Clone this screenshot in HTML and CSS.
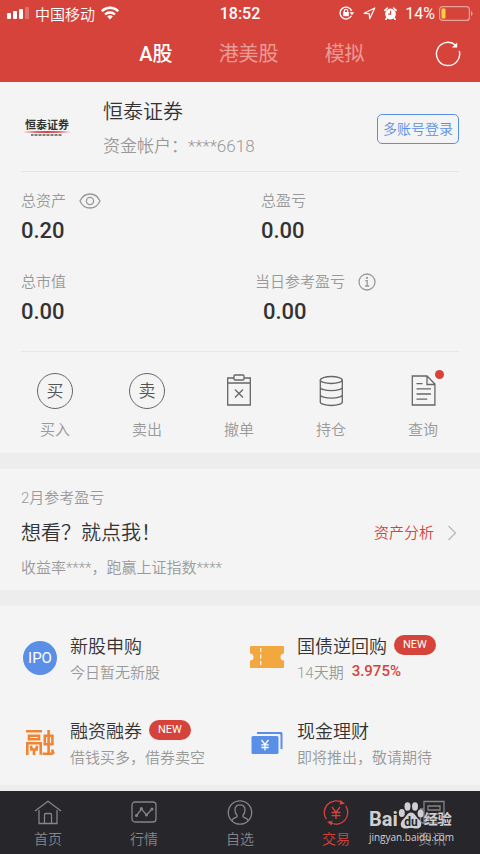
FILE: index.html
```html
<!DOCTYPE html>
<html lang="zh-CN">
<head>
<meta charset="utf-8">
<meta name="viewport" content="width=device-width, initial-scale=1">
<title>交易</title>
<link rel="stylesheet" href="styles.css">
</head>
<body>
<header class="top">
  <div class="status">
    <div class="status-left">
      <svg width="22" height="12" viewBox="0 0 22 12" fill="#fff"><rect x="0" y="6" width="4" height="6" rx="1"/><rect x="6" y="4" width="4" height="8" rx="1"/><rect x="12" y="2" width="4" height="10" rx="1"/><rect x="18" y="0" width="4" height="12" rx="1" opacity=".25"/></svg>
      <span class="carrier">中国移动</span>
      <svg width="18" height="14" viewBox="0 0 18 14" fill="none" stroke="#fff" stroke-width="2.4"><path d="M.8 5.2a11.6 11.6 0 0 1 16.4 0M4 8.5a7.1 7.1 0 0 1 10 0"/><path d="M9 13.4 6.2 10.6a4 4 0 0 1 5.6 0z" fill="#fff" stroke="none"/></svg>
    </div>
    <time class="clock">18:52</time>
    <div class="status-right">
      <svg width="16" height="14" viewBox="0 0 16 14" fill="none" stroke="#fff" stroke-width="1.3"><path d="M12.4 9.8A6 6 0 1 1 12.7 5"/><path d="M10.5 6.2h4.8l-2.4 3z" fill="#fff" stroke="none"/><rect x="4.2" y="6" width="5.6" height="4.2" fill="#fff" stroke="none"/><path d="M5.3 6.5V5a1.7 1.7 0 0 1 3.4 0v1.5"/></svg>
      <svg width="13" height="13" viewBox="0 0 13 13" fill="none" stroke="#fff" stroke-width="1.2" stroke-linejoin="round"><path d="M11.8 1 1.2 6.3l5 .4.5 5z"/></svg>
      <svg width="13" height="13" viewBox="0 0 13 13"><circle cx="6.5" cy="7" r="5.4" fill="#fff"/><path d="M.9 3.4 3.4 1M12.1 3.4 9.6 1M2.8 11l-1 1.4M10.2 11l1 1.4" stroke="#fff" stroke-width="1.6" stroke-linecap="round"/><path d="M6.6 3.8v3.4H4.2" fill="none" stroke="#d6433b" stroke-width="1.2"/></svg>
      <span class="percent">14%</span>
      <svg width="34" height="15" viewBox="0 0 34 15"><rect x=".6" y=".6" width="29.8" height="13.8" rx="3" fill="none" stroke="#fff" stroke-opacity=".5" stroke-width="1.2"/><rect x="2.5" y="2.5" width="4" height="10" rx="1" fill="#f8cf3c"/><path d="M32 5v5q1.6-.8 1.6-2.5T32 5z" fill="#fff" fill-opacity=".5"/></svg>
    </div>
  </div>
  <div class="market">
    <nav class="tabs">
      <a href="#a" class="tab tab-on">A股</a>
      <a href="#hk" class="tab">港美股</a>
      <a href="#sim" class="tab">模拟</a>
    </nav>
    <button class="refresh" type="button" aria-label="刷新">
      <svg width="26" height="26" viewBox="0 0 26 26" fill="none" stroke="#fff" stroke-width="1.4"><path d="M24.3 10A11.6 11.6 0 1 1 20.7 4.2"/><path d="M22.2 1.4v5.2h-5.4z" fill="#fff" stroke="none"/></svg>
    </button>
  </div>
</header>

<main>
  <section class="panel">
    <div class="account">
      <svg class="broker" width="48" height="20" viewBox="0 0 48 20"><text x="24" y="10" text-anchor="middle" class="broker-name">恒泰证券</text><path d="M0 13Q24 11 48 13 24 15 0 13z" fill="#d9444c"/><path d="M8 16h31" stroke="#555" stroke-width="1.3" stroke-dasharray="2 .5 1 .5"/></svg>
      <div class="holder">
        <h1 class="holder-name">恒泰证券</h1>
        <p class="holder-no">资金帐户：****6618</p>
      </div>
      <button class="multi" type="button">多账号登录</button>
    </div>
    <dl class="stats">
      <div>
        <dt class="label">总资产 <svg width="22" height="16" viewBox="0 0 22 16" fill="none" stroke="#999" stroke-width="1.3"><path d="M1 8C3 3.500 6.500 1 11 1s8 2.500 10 7c-2 4.500-5.500 7-10 7S3 12.500 1 8z"/><circle cx="11" cy="8" r="3.600"/></svg></dt>
        <dd class="value">0.20</dd>
      </div>
      <div class="inset">
        <dt class="label">总盈亏</dt>
        <dd class="value">0.00</dd>
      </div>
      <div>
        <dt class="label">总市值</dt>
        <dd class="value">0.00</dd>
      </div>
      <div class="today">
        <dt class="label">当日参考盈亏 <svg width="18" height="18" viewBox="0 0 18 18" fill="none" stroke="#999" stroke-width="1.3"><circle cx="9" cy="9" r="8"/><path d="M7.200 7.600H9.200V13M7 13h4.300"/><circle cx="9" cy="4.900" r="1.100" fill="#999" stroke="none"/></svg></dt>
        <dd class="value">0.00</dd>
      </div>
    </dl>
    <nav class="actions">
      <a href="#buy" class="action"><span class="ring">买</span>买入</a>
      <a href="#sell" class="action"><span class="ring">卖</span>卖出</a>
      <a href="#cancel" class="action"><svg width="36" height="36" viewBox="0 0 36 36" fill="none" stroke="#666" stroke-width="1.3"><path d="M13 5H6.700v27h22.600V5H23M6.700 10h22.600"/><rect x="13" y="2" width="10" height="5" rx="1"/><path d="m14 16.500 8 8m0-8-8 8"/></svg>撤单</a>
      <a href="#hold" class="action"><svg width="36" height="36" viewBox="0 0 36 36" fill="none" stroke="#666" stroke-width="1.3"><ellipse cx="18.300" cy="7" rx="11" ry="3.500"/><path d="M7.300 7v22c0 1.900 4.900 3.500 11 3.500s11-1.600 11-3.500V7M7.300 14.300c0 1.900 4.900 3.400 11 3.400s11-1.500 11-3.400M7.300 21.700c0 1.900 4.900 3.400 11 3.400s11-1.500 11-3.400"/></svg>持仓</a>
      <a href="#query" class="action"><svg width="36" height="36" viewBox="0 0 36 36" fill="none" stroke="#666" stroke-width="1.3"><path d="M22 3H7.300v29h22.600V11zv8.500h7.900M11.500 10.700h6M11.500 15.800H26M11.500 21H26M11.500 26.200h10.700"/></svg><i class="dot"></i>查询</a>
    </nav>
  </section>

  <section class="panel review">
    <div class="review-text">
      <p class="muted">2月参考盈亏</p>
      <h2 class="review-title">想看？就点我！</h2>
      <p class="muted">收益率****，跑赢上证指数****</p>
    </div>
    <a href="#analysis" class="analysis">资产分析 <svg width="10" height="16" viewBox="0 0 10 16" fill="none" stroke="#bbb" stroke-width="1.400"><path d="m1.500 1 7 7-7 7"/></svg></a>
  </section>

  <section class="panel products">
    <a href="#ipo" class="product">
      <span class="pic"><span class="ipo">IPO</span></span>
      <span><strong class="title">新股申购</strong><small class="sub">今日暂无新股</small></span>
    </a>
    <a href="#repo" class="product">
      <svg class="pic" width="36" height="36" viewBox="0 0 36 36"><path d="M2 6h32q1 0 1 1v6.500a3.500 3.500 0 0 0 0 7V27q0 1-1 1H2q-1 0-1-1v-6.500a3.500 3.500 0 0 0 0-7V7q0-1 1-1z" fill="#f3a73f"/><path d="M11.700 8v18" stroke="#fff" stroke-width="1.200" stroke-dasharray="4 2.500"/></svg>
      <span><strong class="title">国债逆回购<em class="new">NEW</em></strong><small class="sub">14天期 <b class="rate">3.975%</b></small></span>
    </a>
    <a href="#margin" class="product">
      <svg class="pic" width="36" height="36" viewBox="0 0 36 36" fill="none" stroke="#ee8535" stroke-width="2.600"><path d="M4 6.300h16M7 10.700h10v3.600H7zM5.300 30V18.300h13.400v11.500M8.500 21l1.500 2.500M15.500 21 14 23.500M8 24.500h8M12 24.500V30M22.800 10.700h7.600v8.500h-7.600zM26.600 5v23M20.500 28.700h10.800M30 24.500l1.500 4.500"/></svg>
      <span><strong class="title">融资融券<em class="new">NEW</em></strong><small class="sub">借钱买多，借券卖空</small></span>
    </a>
    <a href="#cash" class="product">
      <svg class="pic" width="36" height="36" viewBox="0 0 36 36"><path d="M8 7h24q1.500 0 1.500 1.500V24h-2V10.300Q31.500 9 30 9H8z" fill="#5a8fe8"/><rect x="2.500" y="11" width="27" height="18" rx="1.500" fill="#5a8fe8"/><path d="m12.500 15 3.500 4.500 3.500-4.500M16 19.500V25.500M12.300 19.800h7.400M12.300 22.500h7.400" fill="none" stroke="#fff" stroke-width="1.300"/></svg>
      <span><strong class="title">现金理财</strong><small class="sub">即将推出，敬请期待</small></span>
    </a>
  </section>
</main>

<footer class="bottom">
  <nav class="bar">
    <a href="#home" class="item"><svg width="28" height="26" viewBox="0 0 28 26"><path d="M1 11 14 1.200 27 11M5 10v13.500h18V10M10.500 23.500V14.500q0-1 1-1h5q1 0 1 1v9"/></svg>首页</a>
    <a href="#quote" class="item"><svg width="28" height="26" viewBox="0 0 28 26"><rect x="2" y="2" width="24" height="20" rx="3"/><path d="m6.500 15.500 5-6.500 5 6L22 9"/><g class="fill"><circle cx="6.500" cy="15.500" r="1.500"/><circle cx="11.300" cy="8.500" r="1.500"/><circle cx="16.500" cy="15" r="1.500"/><circle cx="22" cy="9" r="1.500"/></g></svg>行情</a>
    <a href="#fav" class="item"><svg width="28" height="26" viewBox="0 0 28 26"><circle cx="14" cy="12.500" r="11.700"/><path d="M6 21c0-2.500 2-3 4.500-3.800 1-.4.800-1.700 0-2.700C9.500 13.200 9 11.800 9 10c0-3.200 2-5.200 5-5.200s5 2 5 5.200c0 1.800-.5 3.200-1.500 4.500-.8 1-1 2.300 0 2.700C20 18 22 18.500 22 21"/></svg>自选</a>
    <a href="#trade" class="item item-on"><svg width="28" height="26" viewBox="0 0 28 26"><path d="M19.500 2.300A11.700 11.700 0 0 0 4.300 19.200M8.500 22.800A11.700 11.700 0 0 0 23.700 5.900M10 7l4 5.500L18 7M14 12.500V19M9.500 12.500h9M9.500 15.600h9"/><path class="fill" d="m18.500 0 4.500 3.800-5.500.9zM9.500 25.500 5 21.700l5.500-.9z"/></svg>交易</a>
    <a href="#news" class="item"><svg width="28" height="26" viewBox="0 0 28 26"><path d="M6 1.500h20V23H6zM10 6h12v4H10zM10 14h12M10 18h12M6 9H2.500v11.500q0 2.500 2.500 2.500h2"/></svg>资讯</a>
  </nav>
  <div class="mark">
    <div class="mark-top"><span>Bai</span><svg width="26" height="27" viewBox="0 0 26 27" fill="#d0d0d2"><ellipse cx="3.800" cy="11" rx="3" ry="4"/><ellipse cx="9.500" cy="4.500" rx="3" ry="4.200"/><ellipse cx="17" cy="4.500" rx="3" ry="4.200"/><ellipse cx="22.600" cy="11.500" rx="3" ry="4"/><path d="M13 10.500c4 0 4.500 4 8 7 3.500 3.200 3 9-2 9-3 0-4-.5-6-.5s-3 .5-6 .5c-5 0-5.500-5.800-2-9 3.500-3 4-7 8-7z"/><text x="13" y="24" text-anchor="middle" class="du">du</text></svg><span class="jy">经验</span></div>
    <div class="mark-url">jingyan.baidu.com</div>
  </div>
</footer>
</body>
</html>
```
FILE: styles.css
```css
* { box-sizing: border-box; }

body {
  margin: 0;
  min-height: 100vh;
  display: flex;
  flex-direction: column;
  background: #ededed;
  color: #333;
  font-family: Roboto, "Noto Sans CJK SC", sans-serif;
  font-size: 15px;
  font-weight: 350;
}

a { color: inherit; text-decoration: none; }
button { font: inherit; background: none; cursor: pointer; }
h1, h2, p, dl, dd { margin: 0; font-weight: inherit; }
svg { display: block; flex: none; }

.top { background: #d6433b; color: #fff; }

.status {
  display: grid;
  grid-template-columns: 1fr auto 1fr;
  align-items: center;
  height: 26px;
  padding: 0 7px;
  font-family: Roboto, "Noto Sans CJK SC", sans-serif;
}
.status-left, .status-right { display: flex; align-items: center; }
.status-left { gap: 6px; }
.status-right { justify-content: flex-end; gap: 8px; }
.carrier { font-size: 15px; }
.clock { font-size: 16px; font-weight: 500; }
.percent { font-size: 16px; font-weight: 400; margin-right: -4px; }

.market {
  display: grid;
  grid-template-columns: 1fr auto 1fr;
  align-items: center;
  height: 56px;
  padding: 0 19px 0 43px;
}
.tabs { grid-column: 2; display: flex; gap: 46px; }
.tab { font-size: 20px; line-height: 28px; color: #eb9c97; font-weight: 400; }
.tab-on { color: #fff; font-weight: 500; }
.refresh { justify-self: end; padding: 0; border: 0; color: #fff; }

.panel { background: #f4f4f4; margin-bottom: 16px; }

.account {
  display: flex;
  align-items: center;
  margin: 0 21px;
  padding: 13px 0 8px;
  border-bottom: 1px solid #e6e6e6;
}
.broker { margin-left: 2px; }
.broker-name { font-size: 11px; font-weight: 700; fill: #333; }
.holder { flex: 1; margin-left: 32px; line-height: 34px; }
.holder-name { font-size: 20px; }
.holder-no { font-size: 17px; color: #999; }
.multi {
  height: 30px;
  padding: 0 5px;
  border: 1px solid #5a8fe8;
  border-radius: 5px;
  color: #5a8fe8;
  font-size: 14px;
  line-height: 24px;
}

.stats {
  display: grid;
  grid-template-columns: 234px 1fr;
  row-gap: 21px;
  margin: 0 21px;
  padding: 14px 0 24px;
  border-bottom: 1px solid #e6e6e6;
  line-height: 30px;
}
.label { display: flex; align-items: center; gap: 13px; color: #999; }
.value { font-size: 22px; font-weight: 500; }
.inset { padding-left: 6px; }
.today .value { padding-left: 8px; }

.actions {
  display: grid;
  grid-template-columns: repeat(5, 1fr);
  padding: 21px 11px 10px 9px;
}
.action {
  position: relative;
  display: flex;
  flex-direction: column;
  align-items: center;
  gap: 8px;
  color: #999;
  line-height: 26px;
}
.ring {
  width: 36px;
  height: 36px;
  border: 1px solid #666;
  border-radius: 50%;
  color: #555;
  font-size: 17px;
  line-height: 34px;
  text-align: center;
}
.dot {
  position: absolute;
  top: -3px;
  left: calc(50% + 12px);
  width: 9px;
  height: 9px;
  border-radius: 50%;
  background: #d6433b;
}

.review {
  display: flex;
  align-items: center;
  justify-content: space-between;
  padding: 16px 23px 9px 21px;
}
.review-text { display: grid; gap: 9px; line-height: 26px; }
.muted { color: #999; }
.review-title { font-size: 20px; }
.analysis { display: flex; align-items: center; gap: 13px; color: #d6433b; line-height: 22px; }

.products {
  display: grid;
  grid-template-columns: 1fr 1fr;
  row-gap: 33px;
  padding: 26px 4px 16px 22px;
  margin-bottom: 6px;
}
.product { display: flex; align-items: center; gap: 12px; }
.pic { width: 36px; flex: none; }
.ipo {
  display: block;
  width: 34px;
  height: 34px;
  margin: 0 auto;
  border-radius: 50%;
  background: #5a8fe8;
  color: #fff;
  font-size: 15px;
  font-weight: 400;
  line-height: 34px;
  text-align: center;
}
.title, .sub { display: flex; align-items: center; height: 26px; white-space: nowrap; }
.title { font-size: 18px; font-weight: inherit; gap: 7px; }
.sub { font-size: 15px; color: #999; gap: 8px; }
.new {
  padding: 0 9px;
  border-radius: 10px;
  background: #d6433b;
  color: #fff;
  font-size: 11px;
  font-style: normal;
  font-weight: 400;
  line-height: 20px;
}
.rate { color: #d6433b; font-size: 15px; font-weight: 500; }

.bottom { position: relative; margin-top: auto; background: #27262b; }
.bar {
  display: grid;
  grid-template-columns: repeat(5, 1fr);
  padding: 9px 0 3px;
}
.item {
  display: flex;
  flex-direction: column;
  align-items: center;
  gap: 1px;
  color: #858588;
  font-size: 14px;
  line-height: 24px;
}
.item svg { fill: none; stroke: currentColor; stroke-width: 1.3px; }
.item .fill { fill: currentColor; stroke: none; }
.item-on { color: #d6433b; }

.mark {
  position: absolute;
  right: 26px;
  bottom: 9px;
  color: #d0d0d2;
  pointer-events: none;
}
.mark-top {
  display: flex;
  align-items: flex-end;
  height: 28px;
  font-size: 20px;
  font-weight: 700;
  line-height: 20px;
}
.jy { font-size: 14px; }
.du { font-size: 12px; font-weight: 700; fill: #27262b; }
.mark-url { font-family: "Open Sans", sans-serif; font-size: 10px; font-weight: 400; line-height: 16px; }
```
